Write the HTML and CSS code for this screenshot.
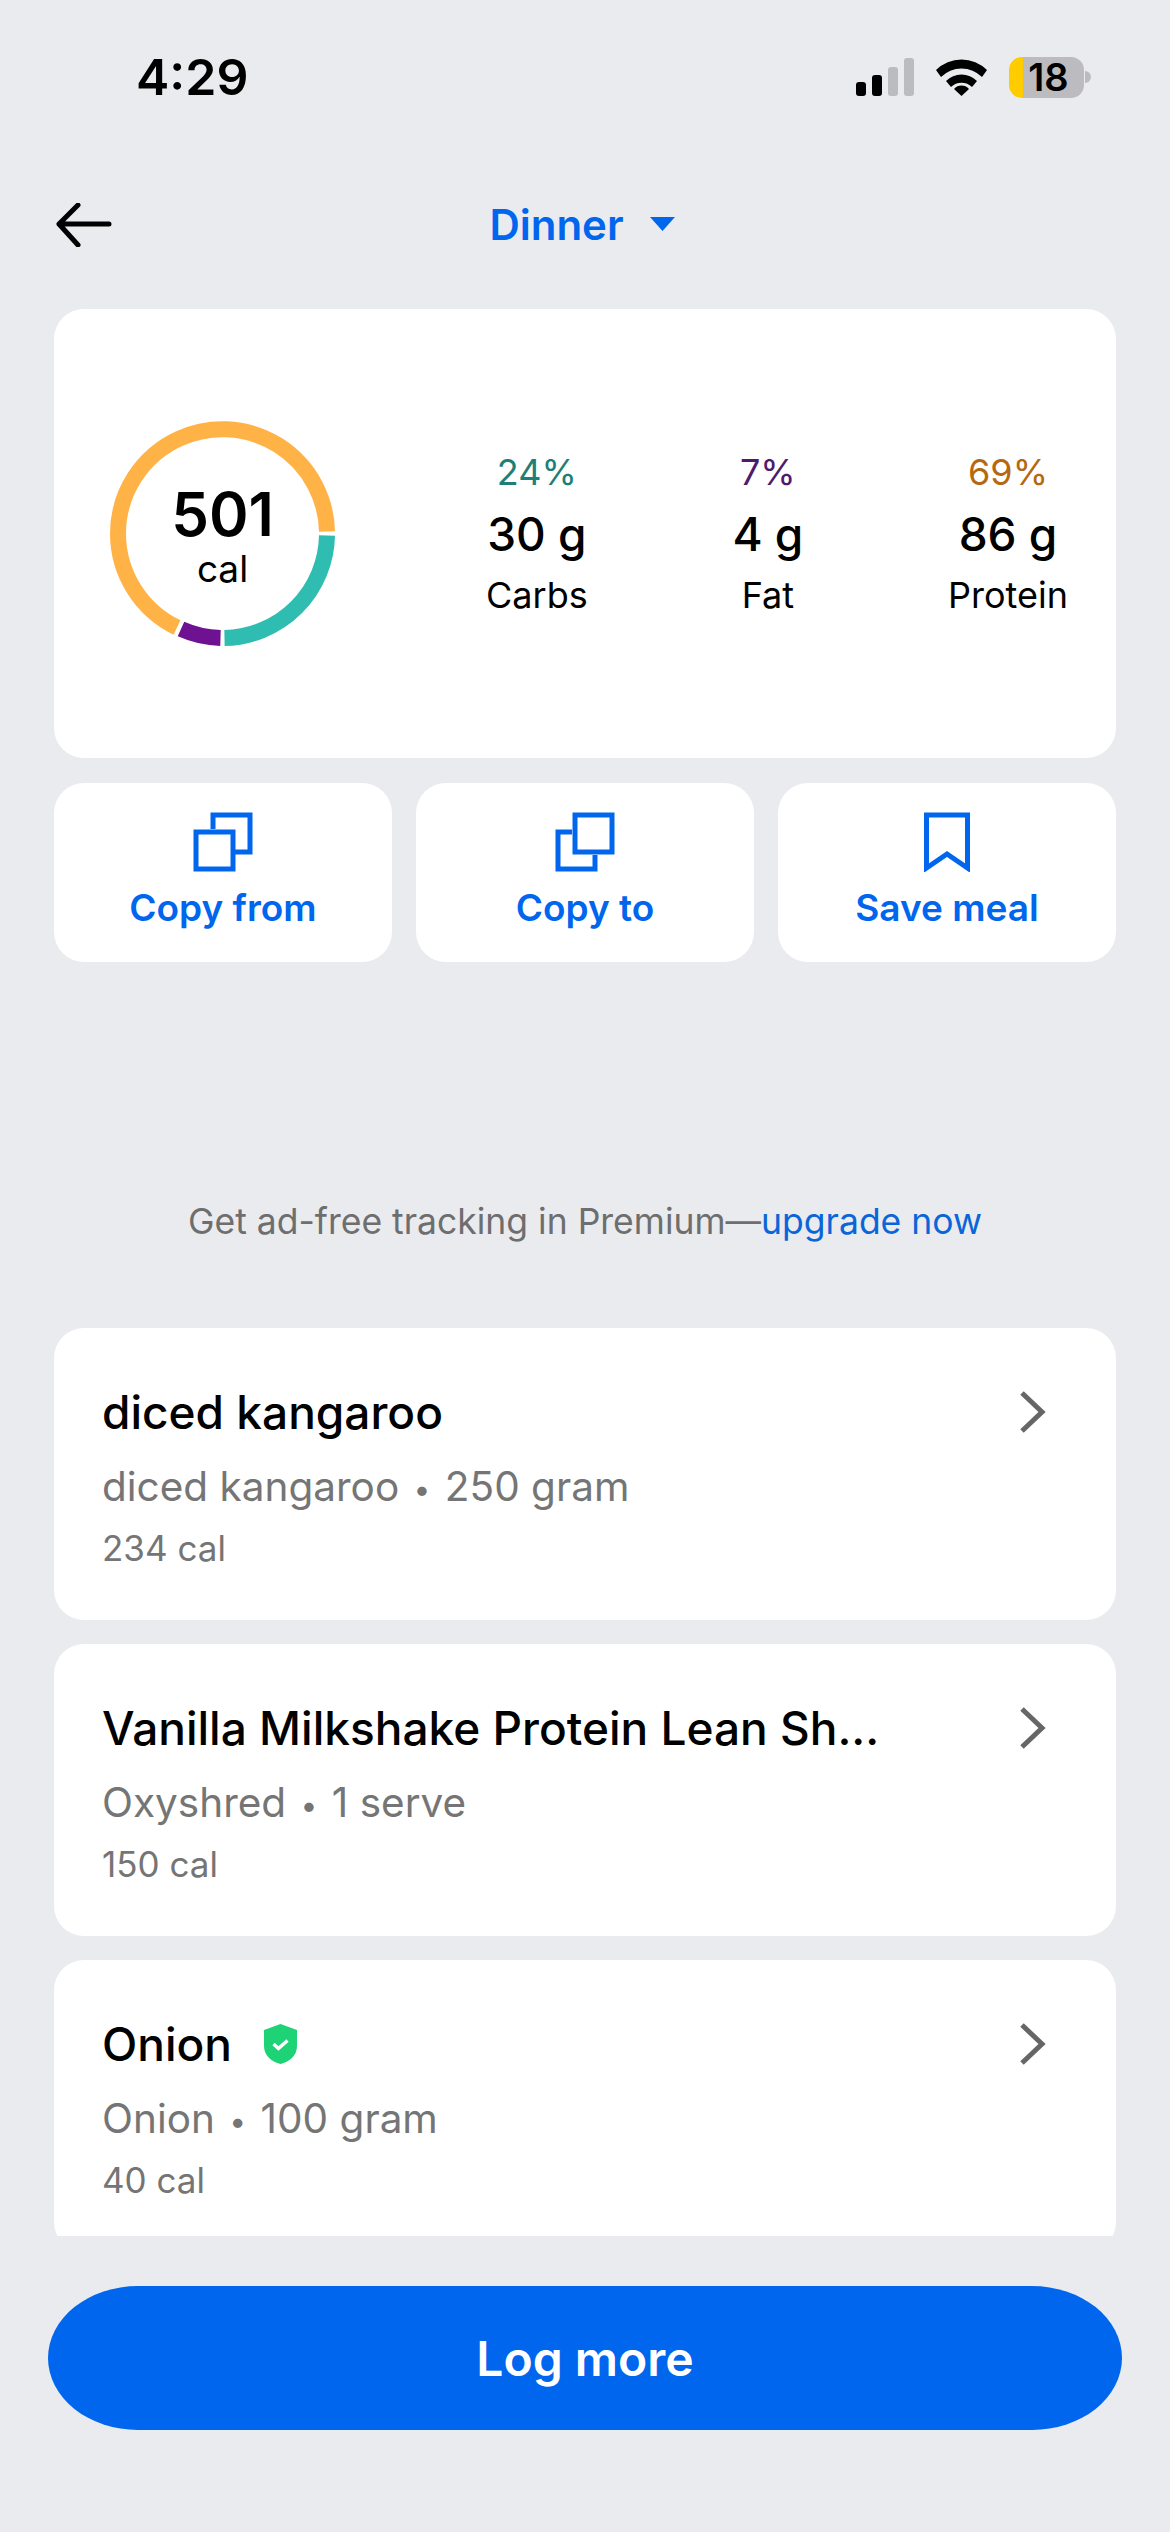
FILE: index.html
```html
<!DOCTYPE html>
<html lang="en">
<head>
    <meta charset="UTF-8">
    <meta name="viewport" content="width=device-width, initial-scale=1.0">
    <title>Dinner</title>
    <link rel="stylesheet" href="styles.css">
</head>
<body>
    <div class="page">
        <div class="status">
            <span class="time">4:29</span>
            <div class="status-icons">
                <div class="signal">
                    <span class="bar bar-1"></span>
                    <span class="bar bar-2"></span>
                    <span class="bar bar-3"></span>
                    <span class="bar bar-4"></span>
                </div>
                <svg class="wifi" width="51" height="37" viewBox="0 0 51 37">
                    <path d="M0 11 A36 36 0 0 1 51 11 L46 18 A29 29 0 0 0 5 18 Z" fill="#000"/>
                    <path d="M10 22 A22 22 0 0 1 41 22 L36 28 A15 15 0 0 0 15 28 Z" fill="#000"/>
                    <path d="M18 30 A10 10 0 0 1 33 30 L25.500 37 Z" fill="#000"/>
                </svg>
                <div class="battery"><span>18</span></div>
                <span class="battery-nub"></span>
            </div>
        </div>

        <div class="nav">
            <svg class="back" width="58" height="44" viewBox="0 0 58 44">
                <path d="M55 21 H5 M24 2 L5 21 L24 42" fill="none" stroke="#000" stroke-width="5" stroke-linecap="round" stroke-linejoin="round"/>
            </svg>
            <div class="nav-title">
                <span>Dinner</span>
                <svg width="25" height="14" viewBox="0 0 25 14"><path d="M0 0 H25 L12.500 14 Z" fill="#0066ee"/></svg>
            </div>
        </div>

        <div class="content">
            <div class="card summary">
                <div class="ring">
                    <svg width="225" height="225" viewBox="0 0 225 225">
                        <path d="M217 110.500 A104.500 104.500 0 0 0 69.500 17.500 A104.500 104.500 0 0 0 8 112.500 A104.500 104.500 0 0 0 67 206.500" fill="none" stroke="#ffb347" stroke-width="16"/>
                        <path d="M71 208 A104.500 104.500 0 0 0 110.500 217" fill="none" stroke="#6f1291" stroke-width="16"/>
                        <path d="M114.500 217 A104.500 104.500 0 0 0 217 114.500" fill="none" stroke="#2ebdb0" stroke-width="16"/>
                    </svg>
                    <div class="ring-label">
                        <div class="ring-value">501</div>
                        <div class="ring-unit">cal</div>
                    </div>
                </div>
                <div class="macros">
                    <div class="macro">
                        <div class="macro-pct pct-carbs">24%</div>
                        <div class="macro-value">30 g</div>
                        <div class="macro-name">Carbs</div>
                    </div>
                    <div class="macro">
                        <div class="macro-pct pct-fat">7%</div>
                        <div class="macro-value">4 g</div>
                        <div class="macro-name">Fat</div>
                    </div>
                    <div class="macro">
                        <div class="macro-pct pct-protein">69%</div>
                        <div class="macro-value">86 g</div>
                        <div class="macro-name">Protein</div>
                    </div>
                </div>
            </div>

            <div class="actions">
                <div class="card action">
                    <svg width="60" height="60" viewBox="0 0 60 60">
                        <path d="M20 17 V3 H57 V40 H42" fill="none" stroke="#0066ee" stroke-width="5"/>
                        <rect x="3" y="20" width="37" height="37" fill="none" stroke="#0066ee" stroke-width="5"/>
                    </svg>
                    <span>Copy from</span>
                </div>
                <div class="card action">
                    <svg width="60" height="60" viewBox="0 0 60 60">
                        <path d="M17 20 H3 V57 H40 V43" fill="none" stroke="#0066ee" stroke-width="5"/>
                        <rect x="20" y="3" width="37" height="37" fill="none" stroke="#0066ee" stroke-width="5"/>
                    </svg>
                    <span>Copy to</span>
                </div>
                <div class="card action">
                    <svg width="60" height="60" viewBox="0 0 60 60">
                        <path d="M9.500 3 H50.500 V56 L30 42 L9.500 56 Z" fill="none" stroke="#0066ee" stroke-width="5"/>
                    </svg>
                    <span>Save meal</span>
                </div>
            </div>

            <p class="promo">Get ad-free tracking in Premium—<a href="#">upgrade now</a></p>
        </div>

        <div class="entries">
            <div class="card entry">
                <div class="entry-text">
                    <div class="entry-title">diced kangaroo</div>
                    <div class="entry-sub">diced kangaroo <span class="dot">•</span> 250 gram</div>
                    <div class="entry-cal">234 cal</div>
                </div>
                <svg class="chevron" width="28" height="44" viewBox="0 0 28 44"><path d="M4 3 L24 22 L4 41" fill="none" stroke="#666" stroke-width="5"/></svg>
            </div>
            <div class="card entry">
                <div class="entry-text">
                    <div class="entry-title">Vanilla Milkshake Protein Lean Sh...</div>
                    <div class="entry-sub">Oxyshred <span class="dot">•</span> 1 serve</div>
                    <div class="entry-cal">150 cal</div>
                </div>
                <svg class="chevron" width="28" height="44" viewBox="0 0 28 44"><path d="M4 3 L24 22 L4 41" fill="none" stroke="#666" stroke-width="5"/></svg>
            </div>
            <div class="card entry">
                <div class="entry-text">
                    <div class="entry-title">Onion
                        <svg class="verified" width="33" height="40" viewBox="0 0 33 40">
                            <path d="M16.500 0 L33 6 V22 C33 32 25 38 16.500 40 C8 38 0 32 0 22 V6 Z" fill="#1ed276"/>
                            <path d="M9.500 20 L14.500 24.500 L23.500 16.500" fill="none" stroke="#fff" stroke-width="3.500"/>
                        </svg>
                    </div>
                    <div class="entry-sub">Onion <span class="dot">•</span> 100 gram</div>
                    <div class="entry-cal">40 cal</div>
                </div>
                <svg class="chevron" width="28" height="44" viewBox="0 0 28 44"><path d="M4 3 L24 22 L4 41" fill="none" stroke="#666" stroke-width="5"/></svg>
            </div>
        </div>

        <div class="footer">
            <button class="log-more">Log more</button>
        </div>
    </div>
</body>
</html>
```

FILE: styles.css
```css
body {
    margin: 0;
    font-family: Inter, "Noto Sans", sans-serif;
    background-color: #eaebef;
    color: #000;
}
.page {
    display: flex;
    flex-direction: column;
    height: 2532px;
    overflow: hidden;
}
.status {
    display: flex;
    justify-content: space-between;
    box-sizing: border-box;
    height: 155px;
    padding: 47px 79px 0 136px;
}
.time {
    font-size: 50px;
    font-weight: 600;
    line-height: 60px;
}
.status-icons {
    display: flex;
    align-items: flex-start;
    padding-top: 10px;
}
.signal {
    display: flex;
    align-items: flex-end;
    gap: 6px;
    height: 38px;
    margin-top: 1px;
    margin-right: 22px;
}
.bar {
    width: 10px;
    border-radius: 3px;
    background-color: #bcbcc0;
}
.bar-1 {
    height: 14px;
    background-color: #000;
}
.bar-2 {
    height: 21px;
    background-color: #000;
}
.bar-3 {
    height: 29px;
}
.bar-4 {
    height: 38px;
}
.wifi {
    margin-top: 2px;
    margin-right: 22px;
}
.battery {
    width: 75px;
    height: 41px;
    border-radius: 13px;
    background: linear-gradient(to right, #ffcc00 14px, #bcbcc0 14px);
    font-size: 38px;
    font-weight: 600;
    line-height: 41px;
    text-align: center;
}
.battery span {
    margin-left: 4px;
}
.battery-nub {
    width: 6px;
    height: 12px;
    margin-top: 14px;
    margin-left: 1px;
    border-radius: 0 6px 6px 0;
    background-color: #bcbcc0;
}
.nav {
    display: grid;
    grid-template-columns: 1fr auto 1fr;
    align-items: center;
    box-sizing: border-box;
    height: 154px;
    padding: 0 60px 14px 54px;
}
.nav-title {
    display: flex;
    align-items: center;
    gap: 26px;
    margin-bottom: 2px;
    font-size: 42px;
    font-weight: 600;
    color: #0066ee;
}
.content {
    padding: 0 54px;
}
.card {
    border-radius: 30px;
    background-color: #fff;
}
.summary {
    display: flex;
    align-items: center;
    box-sizing: border-box;
    height: 449px;
    padding: 0 48px 0 56px;
}
.ring {
    position: relative;
    width: 225px;
    height: 225px;
    margin-right: 151px;
}
.ring svg {
    display: block;
}
.ring-label {
    position: absolute;
    top: 62px;
    left: 0;
    right: 0;
    text-align: center;
}
.ring-value {
    font-size: 60px;
    font-weight: 600;
    line-height: 62px;
}
.ring-unit {
    margin-top: 2px;
    font-size: 37px;
    line-height: 44px;
}
.macros {
    display: flex;
    flex: 1;
    justify-content: space-between;
}
.macro {
    display: flex;
    flex-direction: column;
    align-items: center;
}
.macro-pct {
    font-size: 36px;
    line-height: 44px;
}
.pct-carbs {
    color: #1f7f78;
}
.pct-fat {
    color: #4f1a6e;
}
.pct-protein {
    color: #b5680f;
}
.macro-value {
    margin-top: 12px;
    font-size: 46px;
    font-weight: 500;
    line-height: 56px;
}
.macro-name {
    margin-top: 11px;
    font-size: 36px;
    line-height: 44px;
}
.actions {
    display: grid;
    grid-template-columns: repeat(3, 1fr);
    gap: 24px;
    margin-top: 25px;
}
.action {
    display: flex;
    flex-direction: column;
    align-items: center;
    box-sizing: border-box;
    height: 179px;
    padding-top: 29px;
    font-size: 37px;
    font-weight: 600;
    color: #0066ee;
}
.action span {
    margin-top: 13px;
    line-height: 46px;
}
.promo {
    margin: 238px 0 84px;
    font-size: 35.500px;
    line-height: 44px;
    text-align: center;
    color: #6e6e6e;
}
.promo a {
    color: #0a66d8;
    text-decoration: none;
}
.entries {
    flex: 1;
    min-height: 0;
    overflow: hidden;
    padding: 0 54px;
}
.entry {
    display: flex;
    justify-content: space-between;
    box-sizing: border-box;
    height: 292px;
    margin-bottom: 24px;
    padding: 56px 70px 0 48px;
}
.entry-title {
    display: flex;
    align-items: center;
    gap: 32px;
    font-size: 46px;
    font-weight: 500;
    line-height: 56px;
}
.entry-sub {
    margin-top: 21px;
    font-size: 40.500px;
    line-height: 52px;
    color: #757575;
}
.dot {
    margin: 0 3px;
    font-size: 30px;
    vertical-align: 1px;
}
.entry-cal {
    margin-top: 13px;
    font-size: 35px;
    line-height: 40px;
    color: #757575;
}
.chevron {
    margin-top: 6px;
}
.footer {
    padding: 50px 48px 102px;
}
.log-more {
    display: block;
    width: 100%;
    height: 144px;
    border: none;
    border-radius: 90px / 72px;
    background-color: #0066ee;
    font-family: inherit;
    font-size: 48px;
    font-weight: 600;
    color: #fff;
}
```
